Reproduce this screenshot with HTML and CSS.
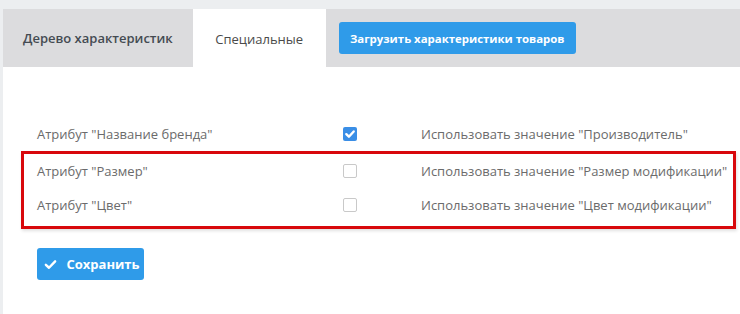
FILE: index.html
```html
<!DOCTYPE html>
<html lang="ru">
<head>
<meta charset="utf-8">
<link rel="stylesheet" href="styles.css">
</head>
<body>
<div class="page">
  <div class="tabs">
    <div class="tab">Дерево характеристик</div>
    <div class="tab active">Специальные</div>
    <button class="btn btn-load">Загрузить характеристики товаров</button>
  </div>
  <div class="content">
    <div class="row first">
      <div class="label">Атрибут "Название бренда"</div>
      <div class="cb checked"><svg viewBox="0 0 14 14" width="14" height="14"><path d="M3.3 7.2 L5.9 9.7 L10.7 4.5" fill="none" stroke="#fff" stroke-width="2.4" stroke-linecap="round" stroke-linejoin="round"/></svg></div>
      <div class="value">Использовать значение "Производитель"</div>
    </div>
    <div class="group">
      <div class="row">
        <div class="label">Атрибут "Размер"</div>
        <div class="cb"></div>
        <div class="value">Использовать значение "Размер модификации"</div>
      </div>
      <div class="row">
        <div class="label">Атрибут "Цвет"</div>
        <div class="cb"></div>
        <div class="value">Использовать значение "Цвет модификации"</div>
      </div>
    </div>
    <button class="btn btn-save"><svg viewBox="0 0 14 14" width="13" height="13"><path d="M2 7.3 L5.4 10.5 L12 3.6" fill="none" stroke="#fff" stroke-width="2.6" stroke-linecap="round" stroke-linejoin="round"/></svg>Сохранить</button>
  </div>
</div>
</body>
</html>
```
FILE: styles.css
```css
html, body {
  margin: 0;
  padding: 0;
  background: #eceef0;
  font-family: "Open Sans", "Liberation Sans", sans-serif;
}
.page {
  padding: 9px 0 0 3px;
  width: 737px;
  height: 305px;
}
.tabs {
  display: flex;
  align-items: center;
  height: 58px;
  background: #dcdcde;
}
.tab {
  height: 58px;
  display: flex;
  align-items: center;
  padding: 0 20px;
  font-size: 13px;
  font-weight: 600;
  color: #444b52;
  box-sizing: border-box;
}
.tab.active {
  background: #fff;
  font-weight: 400;
  color: #4a4a4a;
  width: 133px;
  justify-content: center;
  padding: 2px 0 0 0;
}
.btn {
  border: none;
  border-radius: 3px;
  background: #2f9be9;
  color: #fff;
  font-family: "Open Sans", "Liberation Sans", sans-serif;
  font-weight: 700;
  height: 32px;
  cursor: pointer;
}
.btn-load {
  margin-left: 13px;
  width: 237px;
  padding: 0;
  font-size: 11.4px;
}
.content {
  background: #fff;
  padding: 50px 4px 0 18px;
  height: 197px;
}
.row {
  display: grid;
  grid-template-columns: 306px 78px 1fr;
  align-items: center;
  height: 34px;
  font-size: 13px;
  color: #6b6b6b;
}
.row.first {
  padding-left: 16px;
}
.group {
  border: 3px solid #d8080c;
  padding: 0 0 4px 13px;
  box-shadow: 1px 2px 3px rgba(0, 0, 0, 0.12);
}
.cb {
  width: 14px;
  height: 14px;
  box-sizing: border-box;
  border: 1px solid #c9c9c9;
  border-radius: 2px;
  background: #fff;
}
.cb.checked {
  border: none;
  background: #3a8ee6;
}
.cb svg {
  display: block;
}
.btn-save {
  margin: 19px 0 0 16px;
  width: 107px;
  font-size: 13px;
  display: flex;
  align-items: center;
  justify-content: center;
  gap: 9px;
  padding: 0 0 0 3px;
}
```
